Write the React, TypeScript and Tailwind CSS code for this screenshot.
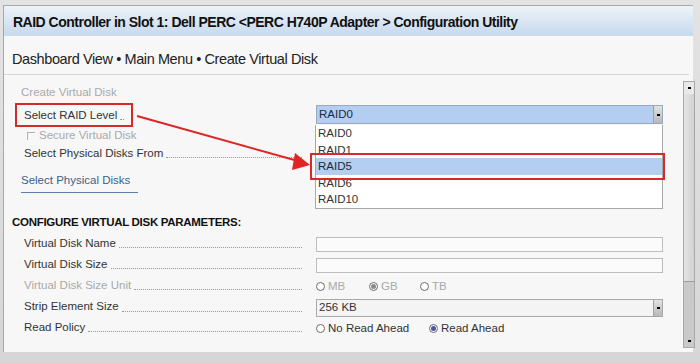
import React from "react";

type Row = {
  label: string;
  muted?: boolean;
  field: React.ReactNode;
};

function Leader({ label, muted }: { label: string; muted?: boolean }) {
  return (
    <div className="flex items-end h-full">
      <span className={muted ? "text-[#a9a9a9]" : "text-[#333]"}>{label}</span>
      <span className="flex-1 ml-[3px] mb-[4px] border-b border-dotted border-[#9a9a9a]" />
    </div>
  );
}

function Radio({ checked, label, muted, dot }: { checked?: boolean; label: string; muted?: boolean; dot?: string }) {
  return (
    <span className={"flex items-center gap-[3px] " + (muted ? "text-[#a9a9a9]" : "text-[#333]")}>
      <span className="w-[9px] h-[9px] rounded-full border border-[#6b6b6b] bg-white flex items-center justify-center">
        {checked && <span className={"w-[5px] h-[5px] rounded-full " + (dot || "bg-[#4a55a8]")} />}
      </span>
      {label}
    </span>
  );
}

function DropButton() {
  return (
    <span className="w-[9px] h-full bg-gradient-to-b from-[#e2e2e2] to-[#b8b8b8] border-l border-[#a0a0a0] flex items-center justify-center">
      <span className="w-[3px] h-[2px] bg-black" />
    </span>
  );
}

export default function App() {
  const rows: Row[] = [
    { label: "Virtual Disk Name", field: <div className="h-[15px] border border-[#bdbdbd] bg-[#fbfbfb]" /> },
    { label: "Virtual Disk Size", field: <div className="h-[15px] border border-[#bdbdbd] bg-[#fbfbfb]" /> },
    {
      label: "Virtual Disk Size Unit",
      muted: true,
      field: (
        <div className="flex items-center">
          <span className="w-[53px]"><Radio label="MB" muted /></span>
          <span className="w-[51px]"><Radio label="GB" muted checked dot="bg-[#8a8a8a]" /></span>
          <Radio label="TB" muted />
        </div>
      ),
    },
    {
      label: "Strip Element Size",
      field: (
        <div className="h-[18px] border border-[#a9a9a9] bg-[#f4f4f4] flex items-center justify-between pl-[2px]">
          <span>256 KB</span>
          <DropButton />
        </div>
      ),
    },
    {
      label: "Read Policy",
      field: (
        <div className="flex items-center">
          <span className="w-[113px]"><Radio label="No Read Ahead" /></span>
          <Radio label="Read Ahead" checked />
        </div>
      ),
    },
  ];

  const options = ["RAID0", "RAID1", "RAID5", "RAID6", "RAID10"];

  return (
    <div className="relative w-[700px] h-[363px] overflow-hidden bg-gradient-to-b from-[#e3e3e3] to-[#d6d6d6] pt-[5px] font-['Liberation_Sans',Arial,sans-serif] text-[11.5px] text-[#333]">
      <div className="ml-[3px] w-[690px] h-[347px] bg-[#f7f7f7] border-l border-t border-[#a8a8a8] flex flex-col">
        <div className="h-[30px] shrink-0 bg-gradient-to-b from-[#eef3f9] to-[#c7daee] border-b border-[#d0dae6] flex items-center pl-[9px] pt-[4px]">
          <span className="font-bold text-[14px] text-[#111] tracking-[-0.5px]">
            RAID Controller in Slot 1: Dell PERC &lt;PERC H740P Adapter &gt; Configuration Utility
          </span>
        </div>
        <div className="h-[39px] shrink-0 mr-[4px] border-b border-[#d6d6d6] flex items-center pl-[8px] pt-[10px]">
          <span className="text-[14.5px] text-[#222] tracking-[-0.4px]">
            Dashboard View • Main Menu • Create Virtual Disk
          </span>
        </div>
        <div className="flex-1 flex min-h-0">
          <div className="flex-1 pl-[17px] pt-[9px]">
            <div className="text-[#a9a9a9] h-[16px] leading-[16px]">Create Virtual Disk</div>
            <div className="grid grid-cols-[278px_347px] gap-x-[14px] pl-[3px] mt-[6px]">
              <div className="h-[18px] w-[100px]"><Leader label="Select RAID Level" /></div>
              <div className="h-[19px] -mt-[1px] border border-[#9aa9bb] bg-[#b3cef0] flex items-center justify-between pl-[2px] text-[#1c2a3a]">
                <span>RAID0</span>
                <DropButton />
              </div>
            </div>
            <div className="pl-[6px] mt-[4px] h-[16px] flex items-center gap-[4px] text-[#a9a9a9]">
              <span className="w-[8px] h-[8px] border-l border-t border-[#b0b0b0]" />
              Secure Virtual Disk
            </div>
            <div className="grid grid-cols-[278px_347px] gap-x-[14px] pl-[3px] mt-[1px]">
              <div className="h-[17px]"><Leader label="Select Physical Disks From" /></div>
              <div />
            </div>
            <div className="mt-[10px] inline-block text-[#3b5f8c] border-b border-[#5c7fa8] pb-[3px] pr-[8px]">
              Select Physical Disks
            </div>
            <div className="mt-[21px] -ml-[9px] font-bold text-[11.5px] text-[#111] tracking-[-0.3px]">
              CONFIGURE VIRTUAL DISK PARAMETERS:
            </div>
            <div className="mt-[4px] pl-[3px] flex flex-col gap-[4px]">
              {rows.map((r) => (
                <div key={r.label} className="grid grid-cols-[278px_347px] gap-x-[14px] h-[17px] items-center">
                  <div className="h-[16px]"><Leader label={r.label} muted={r.muted} /></div>
                  <div>{r.field}</div>
                </div>
              ))}
            </div>
          </div>
          <div className="w-[12px] mr-[-2px] mt-[6px] mb-[4px] border border-[#a9a9a9] bg-[#c9c9c9] flex flex-col">
            <div className="h-[12px] bg-[#e9e9e9] flex items-center justify-center">
              <span className="w-[3px] h-[2px] bg-black" />
            </div>
            <div className="h-[188px] bg-gradient-to-r from-[#e4e4e4] to-[#d2d2d2] border-b border-[#9c9c9c]" />
            <div className="flex-1" />
            <div className="h-[12px] flex items-center justify-center">
              <span className="w-[3px] h-[2px] bg-black" />
            </div>
          </div>
        </div>
      </div>

      {/* open RAID level list */}
      <div className="absolute left-[315px] top-[125px] w-[348px] border border-[#a9a9a9] border-t-0 bg-white text-[#333]">
        {options.map((o) => (
          <div key={o} className={"h-[16.6px] leading-[16.6px] pl-[2px] " + (o === "RAID5" ? "bg-[#b3cef0] text-[#1c2a3a]" : "")}>
            {o}
          </div>
        ))}
      </div>

      {/* annotations */}
      <div className="absolute left-[15px] top-[103px] w-[118px] h-[24px] border-2 border-[#d42a2a]" />
      <div className="absolute left-[310px] top-[153px] w-[355px] h-[27px] border-2 border-[#d42a2a]" />
      <svg className="absolute left-0 top-0" width="700" height="363">
        <line x1="137" y1="116" x2="298" y2="161" stroke="#e02424" strokeWidth="2" />
        <polygon points="310,165 295,153 292,170" fill="#e02424" />
      </svg>
    </div>
  );
}
